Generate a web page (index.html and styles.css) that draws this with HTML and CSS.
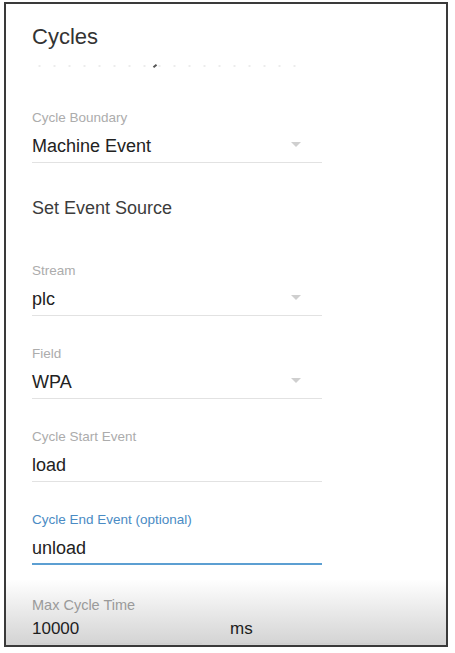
FILE: index.html
```html
<!DOCTYPE html>
<html>
<head>
<meta charset="utf-8">
<link rel="stylesheet" href="styles.css">
</head>
<body>
<div class="frame">
  <h1 class="title">Cycles</h1>
  <div class="dots"><span class="mark"></span></div>
  <div class="form">
    <div class="field">
      <div class="label">Cycle Boundary</div>
      <div class="value-row"><span class="value">Machine Event</span><span class="arrow"></span></div>
    </div>
    <div class="section">Set Event Source</div>
    <div class="field">
      <div class="label">Stream</div>
      <div class="value-row"><span class="value">plc</span><span class="arrow"></span></div>
    </div>
    <div class="field">
      <div class="label">Field</div>
      <div class="value-row"><span class="value">WPA</span><span class="arrow"></span></div>
    </div>
    <div class="field">
      <div class="label">Cycle Start Event</div>
      <div class="value-row"><span class="value">load</span></div>
    </div>
    <div class="field focused">
      <div class="label">Cycle End Event (optional)</div>
      <div class="value-row"><span class="value">unload</span></div>
    </div>
    <div class="max">
      <div class="max-label">Max Cycle Time</div>
      <div class="max-row">
        <div class="max-col"><span class="max-value">10000</span></div>
        <div class="max-col"><span class="max-value">ms</span></div>
      </div>
    </div>
  </div>
</div>
</body>
</html>
```

FILE: styles.css
```css
html, body {
  margin: 0;
  padding: 0;
  background: #ffffff;
}

body {
  font-family: "Liberation Sans", Arial, sans-serif;
}

.frame {
  box-sizing: border-box;
  width: 444px;
  height: 645px;
  margin: 2px 0 0 4px;
  border: 2px solid #3a3a3a;
  padding: 20px 0 0 26px;
  overflow: hidden;
  background: linear-gradient(to bottom, #ffffff 0, #ffffff 575px, #d3d3d3 100%);
}

.title {
  margin: 0;
  font-size: 22px;
  line-height: 26px;
  font-weight: normal;
  color: #333333;
}

.dots {
  margin-top: 14px;
  width: 266px;
  height: 4px;
  background-image: radial-gradient(circle, #ececec 0.8px, transparent 1.4px);
  background-size: 15px 4px;
  display: flex;
  align-items: center;
}

.mark {
  display: block;
  width: 4px;
  height: 2px;
  margin-left: 121px;
  background: #555555;
  transform: rotate(-40deg);
}

.form {
  margin-top: 42px;
  display: flex;
  flex-direction: column;
  gap: 30px;
  width: 290px;
}

.field {
  border-bottom: 1px solid #e2e2e2;
  padding-bottom: 4px;
}

.field.focused {
  border-bottom: 2px solid #5c9fd2;
  padding-bottom: 3px;
}

.label {
  font-size: 13.5px;
  line-height: 16px;
  color: #acacac;
  margin-bottom: 8px;
}

.focused .label {
  color: #4a8bc4;
}

.value-row {
  display: flex;
  justify-content: space-between;
  align-items: flex-start;
  height: 24px;
}

.value {
  font-size: 18px;
  line-height: 24px;
  color: #222222;
}

.arrow {
  width: 0;
  height: 0;
  margin-top: 8px;
  margin-right: 21px;
  border-left: 5px solid transparent;
  border-right: 5px solid transparent;
  border-top: 5px solid #cfcfcf;
}

.section {
  margin-top: 3px;
  margin-bottom: 13px;
  font-size: 18px;
  line-height: 24px;
  color: #3c3c3c;
}

.max {
  margin-top: 2px;
}

.max-label {
  font-size: 14.5px;
  line-height: 16px;
  color: #9a9a9a;
  margin-bottom: 5px;
}

.max-row {
  display: flex;
  gap: 28px;
  width: 368px;
}

.max-col {
  flex: 1;
  padding-bottom: 3px;
  border-bottom: 1px solid #cfcfcf;
}

.max-value {
  font-size: 17px;
  line-height: 22px;
  color: #1e1e1e;
}
```
